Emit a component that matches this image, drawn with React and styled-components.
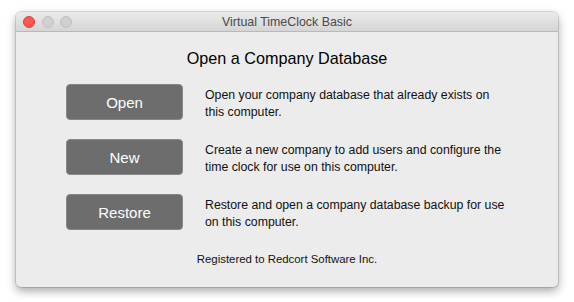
import React from "react";
import styled, { createGlobalStyle } from "styled-components";

const GlobalStyle = createGlobalStyle`
  html, body {
    margin: 0;
    padding: 0;
    background: #ffffff;
  }
  body {
    font-family: "Liberation Sans", Arial, sans-serif;
  }
`;

const Page = styled.div`
  padding: 12px 16px;
`;

const Window = styled.div`
  width: 542px;
  height: 275px;
  box-sizing: border-box;
  background: #ececec;
  border-radius: 5px;
  overflow: hidden;
  box-shadow: 0 0 0 1px rgba(0, 0, 0, 0.12), 0 4px 10px rgba(0, 0, 0, 0.35);
  display: flex;
  flex-direction: column;
`;

const TitleBar = styled.div`
  height: 19px;
  display: flex;
  align-items: center;
  position: relative;
  background: linear-gradient(#ebebeb, #d5d5d5);
  border-bottom: 1px solid #b9b9b9;
`;

const Lights = styled.div`
  display: flex;
  gap: 6.5px;
  padding-left: 7px;
`;

const Light = styled.span`
  width: 12px;
  height: 12px;
  border-radius: 50%;
  box-sizing: border-box;
  background: ${(p) => (p.red ? "#fc5753" : "#d0d0d0")};
  border: 1px solid ${(p) => (p.red ? "#df3e3a" : "#bfbfbf")};
`;

const Title = styled.div`
  position: absolute;
  left: 0;
  right: 0;
  text-align: center;
  font-size: 12.4px;
  color: #4a4a4a;
  pointer-events: none;
`;

const Body = styled.div`
  flex: 1;
  display: flex;
  flex-direction: column;
  align-items: center;
  padding-top: 17px;
`;

const Heading = styled.h1`
  margin: 0 0 16px;
  font-size: 16.2px;
  line-height: 19px;
  font-weight: normal;
  color: #000;
`;

const Rows = styled.div`
  align-self: stretch;
  display: flex;
  flex-direction: column;
  gap: 19px;
  padding-left: 50px;
`;

const Row = styled.div`
  display: flex;
  align-items: flex-start;
  gap: 22px;
`;

const Button = styled.button`
  width: 117px;
  height: 36px;
  flex-shrink: 0;
  background: #6d6d6d;
  border: 1px solid #888;
  border-radius: 4px;
  color: #fff;
  font-family: inherit;
  font-size: 15px;
  cursor: pointer;
`;

const Desc = styled.p`
  margin: 3px 0 0;
  width: 302px;
  font-size: 12.3px;
  line-height: 16.5px;
  color: #111;
`;

const Footer = styled.div`
  margin-top: 23px;
  font-size: 11.4px;
  color: #111;
`;

const rows = [
  {
    label: "Open",
    text: "Open your company database that already exists on this computer.",
  },
  {
    label: "New",
    text:
      "Create a new company to add users and configure the time clock for use on this computer.",
  },
  {
    label: "Restore",
    text:
      "Restore and open a company database backup for use on this computer.",
  },
];

export default function App() {
  return (
    <Page>
      <GlobalStyle />
      <Window>
        <TitleBar>
          <Lights>
            <Light red />
            <Light />
            <Light />
          </Lights>
          <Title>Virtual TimeClock Basic</Title>
        </TitleBar>
        <Body>
          <Heading>Open a Company Database</Heading>
          <Rows>
            {rows.map((r) => (
              <Row key={r.label}>
                <Button>{r.label}</Button>
                <Desc>{r.text}</Desc>
              </Row>
            ))}
          </Rows>
          <Footer>Registered to Redcort Software Inc.</Footer>
        </Body>
      </Window>
    </Page>
  );
}
